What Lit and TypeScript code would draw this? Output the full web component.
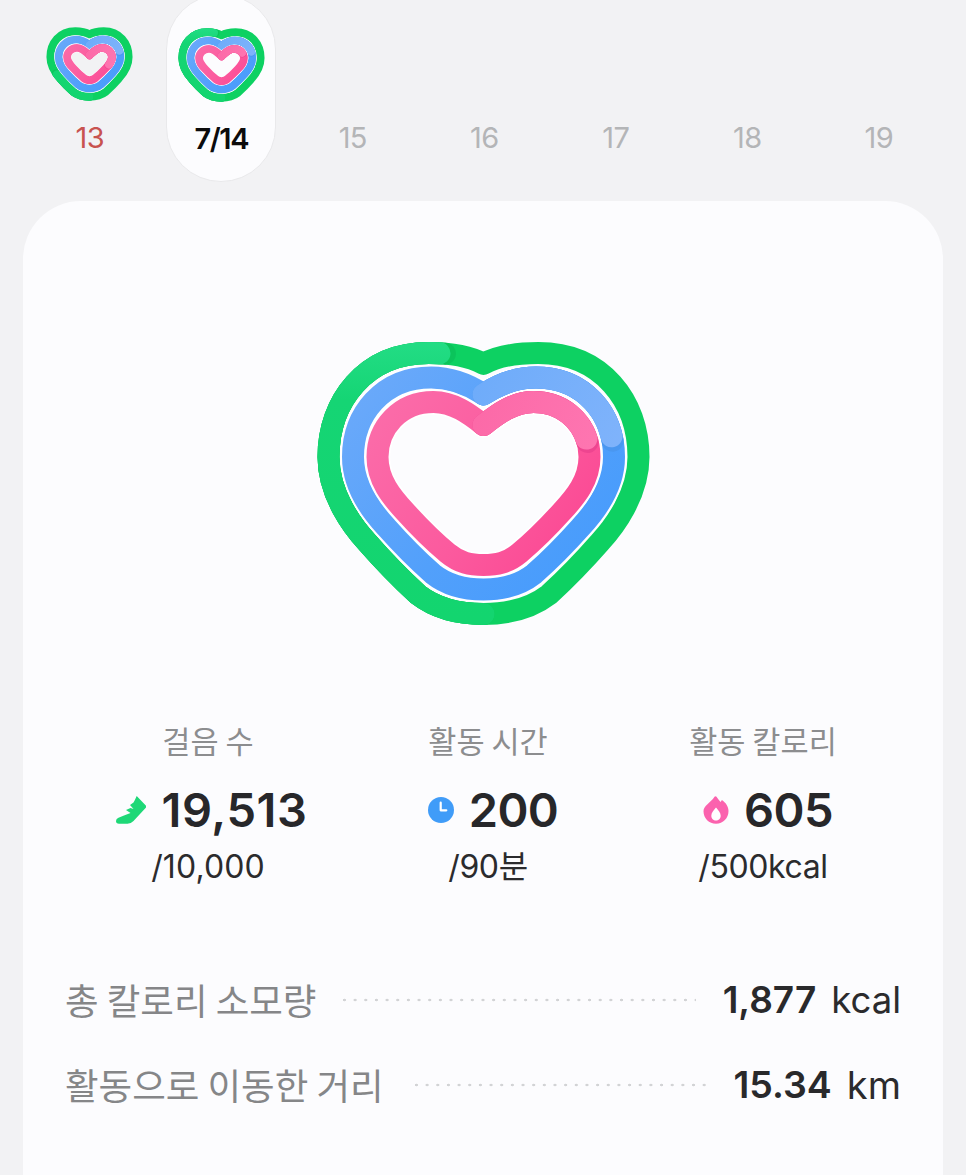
import { LitElement, html, css, svg } from "lit";
import { customElement } from "lit/decorators.js";

type N = [number, number, number, number];
const PTS: N[] = [
  [-14, 414, -0.02, -1.19], [-30, 402, -0.08, -1], [-50, 402, -0.1, -1],
  [-84, 402, -0.7, -1], [-106, 428, -1, -0.55], [-106, 457, -1, 0],
  [-106, 480, -1, 0.3], [-92, 497, -0.78, 0.62], [-78, 512, -0.78, 0.62],
  [-60, 532, -0.72, 0.7], [-48, 543, -0.65, 0.78], [-36, 553, -0.6, 0.85],
  [-24, 563, -0.45, 0.95], [-13, 565, -0.2, 1], [0, 565, 0, 1],
];
const CX = 483.5;
const f = (n: number) => n.toFixed(1);
const notchY = (d: number) => 425 - 1.25 * d;
function pt(p: N, d: number, side: number) {
  return `${f(CX + side * (p[0] + p[2] * d))} ${f(p[1] + p[3] * d)}`;
}
function down(d: number, side: number) {
  let s = "";
  for (let i = 0; i < PTS.length; i += 3) {
    s += `C${pt(PTS[i], d, side)} ${pt(PTS[i + 1], d, side)} ${pt(PTS[i + 2], d, side)}`;
  }
  return s;
}
function up(d: number, side: number) {
  const pts = [...PTS].reverse().slice(1);
  const notch = `${f(CX)} ${f(notchY(d))}`;
  let s = "";
  for (let i = 0; i < pts.length; i += 3) {
    const a = pts[i], b = pts[i + 1], c = pts[i + 2];
    s += `C${pt(a, d, side)} ${pt(b, d, side)} ${c ? pt(c, d, side) : notch}`;
  }
  return s;
}
// side 1 is the left half (the table above holds negative x), side -1 the right half.
const full = (d: number) => `M${f(CX)} ${f(notchY(d))}${down(d, 1)}${up(d, -1)}Z`;
const rightHalf = (d: number) => `M${f(CX)} ${f(notchY(d))}${down(d, -1)}`;
const leftFromBottom = (d: number) => `M${f(CX)} ${f(565 + d)}${up(d, 1)}`;

interface Rings { dg: number; db: number; dp: number; w: number; green: number; blue: number; pink: number; }

function heart(cls: string, pfx: string, r: Rings) {
  const ring = (d: number, base: string) => svg`
    <path d=${full(d)} fill="none" stroke="#ffffff" stroke-width=${r.w + 3.4} stroke-linejoin="round"/>
    <path d=${full(d)} fill="none" stroke=${base} stroke-width=${r.w} stroke-linejoin="round"/>`;
  const over = (p: string, col: string, dark: string, len: number) => svg`
    <path d=${p} pathLength="100" fill="none" stroke=${dark} stroke-width=${r.w} stroke-linecap="round" stroke-dasharray="${len + 1.2} 300"/>
    <path d=${p} pathLength="100" fill="none" stroke=${col} stroke-width=${r.w} stroke-linecap="round" stroke-dasharray="${len} 300"/>`;
  return html`<svg class=${cls} viewBox="313 337 341 293" aria-hidden="true">
    <defs>
      <linearGradient id="${pfx}go" gradientUnits="userSpaceOnUse" x1="400" y1="620" x2="400" y2="345">
        <stop offset="0" stop-color="#13d56f"/><stop offset="0.8" stop-color="#15d574"/><stop offset="1" stop-color="#22dc84"/>
      </linearGradient>
      <linearGradient id="${pfx}b" gradientUnits="userSpaceOnUse" x1="350" y1="400" x2="560" y2="590">
        <stop offset="0" stop-color="#6aa9fa"/><stop offset="0.6" stop-color="#52a0fb"/><stop offset="1" stop-color="#489cfc"/>
      </linearGradient>
      <linearGradient id="${pfx}bo" gradientUnits="userSpaceOnUse" x1="480" y1="380" x2="620" y2="450">
        <stop offset="0" stop-color="#6facfa"/><stop offset="1" stop-color="#7fb3fb"/>
      </linearGradient>
      <linearGradient id="${pfx}p" gradientUnits="userSpaceOnUse" x1="370" y1="420" x2="560" y2="560">
        <stop offset="0" stop-color="#fb6ca9"/><stop offset="0.6" stop-color="#fb5a9e"/><stop offset="1" stop-color="#fb4a94"/>
      </linearGradient>
      <linearGradient id="${pfx}po" gradientUnits="userSpaceOnUse" x1="480" y1="410" x2="600" y2="450">
        <stop offset="0" stop-color="#fc6aa8"/><stop offset="1" stop-color="#fe76b1"/>
      </linearGradient>
    </defs>
    <path d=${full(r.dg)} fill="none" stroke="#0dd162" stroke-width=${r.w} stroke-linejoin="round"/>
    <path d=${leftFromBottom(r.dg)} pathLength="100" fill="none" stroke="#0bc45b" stroke-width=${r.w} stroke-linecap="round" stroke-dasharray="${r.green + 1.2} 300"/>
    <path d=${leftFromBottom(r.dg)} pathLength="100" fill="none" stroke="url(#${pfx}go)" stroke-width=${r.w} stroke-linecap="round" stroke-dasharray="${r.green} 300"/>
    ${ring(r.db, `url(#${pfx}b)`)}
    ${over(rightHalf(r.db), `url(#${pfx}bo)`, "#4a97f0", r.blue)}
    ${ring(r.dp, `url(#${pfx}p)`)}
    ${over(rightHalf(r.dp), `url(#${pfx}po)`, "#ee4590", r.pink)}
  </svg>`;
}

const dates = ["13", "7/14", "15", "16", "17", "18", "19"];

@customElement("app-root")
export class AppRoot extends LitElement {
  static styles = css`
    :host {
      display: block;
      width: 966px;
      height: 1175px;
      overflow: hidden;
      background: #f2f2f4;
      font-family: Inter, "Noto Sans CJK KR", "Liberation Sans", sans-serif;
      color: #29292b;
    }
    .strip {
      display: grid;
      grid-template-columns: repeat(7, 131.5px);
      padding-left: 24px;
      height: 181px;
    }
    .day {
      display: flex;
      flex-direction: column;
      align-items: center;
      box-sizing: border-box;
      height: 181px;
      padding-top: 25px;
    }
    .day.sel {
      justify-self: center;
      width: 110px;
      height: 188px;
      margin-top: -6px;
      padding-top: 31px;
      background: #fcfcfe;
      border: 1px solid #e9e9eb;
      border-radius: 55px;
    }
    .mini { width: 89px; height: 78px; display: block; }
    .slot { height: 78px; }
    .num {
      margin-top: 17px;
      font-size: 29px;
      line-height: 36px;
      letter-spacing: -0.6px;
      color: #b4b5b7;
    }
    .num.sun { color: #c8534f; }
    .num.cur { color: #0b0b0c; font-weight: 600; letter-spacing: -1.4px; }
    .card {
      margin: 20px 23px 0;
      height: 1000px;
      background: #fcfcfe;
      border-radius: 58px 58px 0 0;
      overflow: hidden;
    }
    .hero { display: flex; justify-content: center; padding-top: 136px; }
    .big { width: 341px; height: 293px; display: block; }
    .stats {
      display: grid;
      grid-template-columns: 370px 190px 360px;
      margin-top: 88px;
    }
    .stat { display: flex; flex-direction: column; align-items: center; }
    .label {
      font-size: 30.6px;
      line-height: 44px;
      color: #8c8d8f;
      font-family: "Noto Sans CJK KR", sans-serif;
    }
    .value {
      display: flex;
      align-items: center;
      gap: 15px;
      padding-left: 8px;
      margin-top: 19px;
      height: 58px;
    }
    .value.shift { padding-left: 10px; }
    .value svg { display: block; }
    .amount {
      font-size: 47px;
      font-weight: 600;
      line-height: 58px;
      letter-spacing: -0.6px;
      color: #27272a;
    }
    .amount.wide { letter-spacing: 0.6px; }
    .goal {
      margin-top: 6px;
      font-size: 32px;
      line-height: 44px;
      letter-spacing: -0.4px;
      color: #2b2b2d;
    }
    .goal.wide { letter-spacing: 0.1px; }
    .rows {
      display: flex;
      flex-direction: column;
      gap: 33px;
      margin-top: 85px;
      padding: 0 42px;
    }
    .row { display: flex; align-items: center; height: 52px; }
    .rlabel {
      font-size: 36.5px;
      line-height: 52px;
      color: #858688;
      font-family: "Noto Sans CJK KR", sans-serif;
    }
    .leader {
      flex: 1;
      height: 4px;
      margin: 0 27px;
      background-image: radial-gradient(circle at 1.5px 2px, #d2d3d5 1.2px, transparent 1.6px);
      background-size: 10.67px 4px;
      background-repeat: repeat-x;
    }
    .row.far .leader { margin: 0 26px 0 31px; }
    .rval { font-size: 37px; font-weight: 600; line-height: 52px; color: #29292b; }
    .row.far .rval { font-size: 37.5px; }
    .unit { font-size: 36.5px; line-height: 52px; margin-left: 15px; color: #2b2b2d; }
    .row.far .unit { font-size: 38px; }
  `;

  render() {
    const miniBase = { dg: 44, db: 12, dp: -20, w: 30 };
    const first: Rings = { ...miniBase, green: 36, blue: 40, pink: 60 };
    const second: Rings = { ...miniBase, green: 93, blue: 40, pink: 38 };
    const hero: Rings = { dg: 49, db: 24.5, dp: 0, w: 22, green: 90, blue: 42, pink: 41 };
    return html`
      <div class="strip">
        ${dates.map((d, i) => html`
          <div class="day ${i === 1 ? "sel" : ""}">
            ${i === 0 ? heart("mini", "a", first) : i === 1 ? heart("mini", "c", second) : html`<div class="slot"></div>`}
            <div class="num ${i === 0 ? "sun" : ""} ${i === 1 ? "cur" : ""}">${d}</div>
          </div>`)}
      </div>
      <div class="card">
        <div class="hero">${heart("big", "h", hero)}</div>
        <div class="stats">
          <div class="stat">
            <div class="label">걸음 수</div>
            <div class="value">
              <svg width="30" height="30" viewBox="0 0 30 30"><path fill="#1ed877" d="M20.700 1L29.800 10.500q1 1.200 0 2.300L17.500 26q-2.500 2.700-6 2.700H3q-3 0-3-2.700q0-2.300 2.500-3.300L8 20.500L14.500 18L10 15L14.500 13L17.500 14L14 10L17.500 7.500q1.500-2.500 3.200-6.500z"/></svg>
              <div class="amount wide">19,513</div>
            </div>
            <div class="goal wide">/10,000</div>
          </div>
          <div class="stat">
            <div class="label">활동 시간</div>
            <div class="value shift">
              <svg width="26" height="26" viewBox="0 0 26 26"><circle cx="13" cy="13" r="13" fill="#409cf8"/><path d="M12.700 5.700v7.600h5.600" fill="none" stroke="#fff" stroke-width="2.200" stroke-linecap="round" stroke-linejoin="round"/></svg>
              <div class="amount">200</div>
            </div>
            <div class="goal">/90분</div>
          </div>
          <div class="stat">
            <div class="label">활동 칼로리</div>
            <div class="value shift">
              <svg width="26" height="28" viewBox="0 0 26 28"><path fill="#fb62ae" d="M11.500.8c.5-.7 1.500-.7 2 0 1.300 2 2.700 3.700 4 5.300.6-.6 1-1.300 1.400-2 3.700 2.500 6.600 6.400 6.600 11 0 7.300-5.500 12.700-12.500 12.700S.5 22.400.5 15.300C.5 9.600 7.500 7 11.500.8z"/><path fill="#fff" d="M13 11.500c2.200 2.700 4.700 5 4.700 8.300 0 2.800-2.100 4.800-4.700 4.800s-4.700-2-4.700-4.800c0-3.300 2.500-5.600 4.700-8.300z"/></svg>
              <div class="amount">605</div>
            </div>
            <div class="goal">/500kcal</div>
          </div>
        </div>
        <div class="rows">
          <div class="row">
            <div class="rlabel">총 칼로리 소모량</div>
            <div class="leader"></div>
            <div class="rval">1,877</div><div class="unit">kcal</div>
          </div>
          <div class="row far">
            <div class="rlabel">활동으로 이동한 거리</div>
            <div class="leader"></div>
            <div class="rval">15.34</div><div class="unit">km</div>
          </div>
        </div>
      </div>
    `;
  }
}
